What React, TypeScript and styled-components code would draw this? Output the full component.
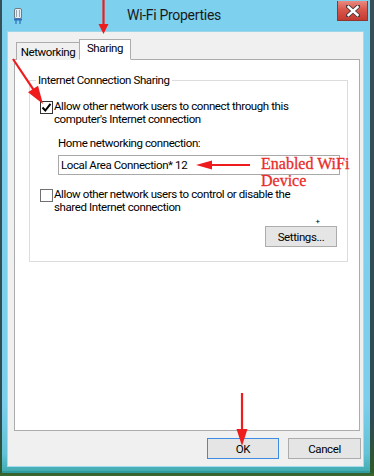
import React from "react";
import styled, { createGlobalStyle } from "styled-components";

const Global = createGlobalStyle`
  html, body { margin: 0; padding: 0; }
  body {
    width: 374px; height: 476px; overflow: hidden;
    font-family: Roboto, "Noto Sans", sans-serif;
    background: #2c4650;
  }
  * { box-sizing: border-box; }
`;

const UI = `Roboto, "Noto Sans", sans-serif`;
const FS = "11.5px";
const LS = "-0.4px";

const Desktop = styled.div`
  position: relative;
  width: 374px;
  height: 476px;
  background: linear-gradient(180deg, #36505a 0%, #2e4a52 88%, #2f5a2c 99%, #3b6a30 100%);
  padding-left: 2px;
`;

const Window = styled.div`
  width: 368px;
  height: 473px;
  display: flex;
  flex-direction: column;
  padding: 0 6px 6px 5px;
  background: linear-gradient(180deg, #7dd0ee 0%, #7ccfec 85%, #63c2d6 96%, #3fa9ad 100%);
  box-shadow: inset 0 -2px 0 #2f9aa0;
`;

const TitleBar = styled.div`
  height: 31px;
  display: flex;
  align-items: flex-start;
`;

const AppIcon = styled.div`
  width: 10px;
  height: 16px;
  margin: 8px 0 0 6px;
  display: flex;
`;

const Title = styled.div`
  flex: 1;
  text-align: center;
  font-family: ${UI};
  font-size: 14px;
  letter-spacing: -0.3px;
  color: #1a1a1a;
  padding-top: 7px;
  padding-right: 12px;
`;

const CloseButton = styled.div`
  width: 31px;
  height: 20px;
  margin-top: 1px;
  margin-right: -4px;
  background: linear-gradient(180deg, #e88a80 0%, #d9574c 45%, #c43a30 100%);
  border: 1px solid #8e3630;
  border-top: none;
  display: flex;
  align-items: center;
  justify-content: center;
`;

const Client = styled.div`
  flex: 1;
  background: #f0f0f0;
  border: 1px solid #a5dcec;
  border-top-color: #9bd6e8;
  display: flex;
  flex-direction: column;
  padding: 7px 2px 7px 5px;
`;

const TabStrip = styled.div`
  display: flex;
  align-items: flex-end;
  padding-left: 3px;
  height: 21px;
  position: relative;
  z-index: 1;
  margin-bottom: -1px;
`;

const Tab = styled.div<{ $active?: boolean }>`
  font-family: ${UI};
  font-size: ${FS};
  letter-spacing: ${LS};
  color: #000;
  display: flex;
  align-items: center;
  justify-content: center;
  border: 1px solid #acacac;
  background: ${(p) => (p.$active ? "#ffffff" : "#f0f0f0")};
  height: ${(p) => (p.$active ? "21px" : "18px")};
  width: ${(p) => (p.$active ? "52px" : "64px")};
  margin-left: ${(p) => (p.$active ? "-1px" : "0")};
  border-bottom: ${(p) => (p.$active ? "1px solid #ffffff" : "none")};
  padding-bottom: ${(p) => (p.$active ? "3px" : "0")};
`;

const Panel = styled.div`
  margin-left: 1px;
  width: 346px;
  height: 372px;
  background: #fff;
  border: 1px solid #acacac;
  padding: 0 11px 0 14px;
`;

const Group = styled.fieldset`
  margin: 13px 0 0 0;
  padding: 0 0 14px 0;
  border: 1px solid #dcdcdc;
  display: flex;
  flex-direction: column;
`;

const Legend = styled.legend`
  font-family: ${UI};
  font-size: ${FS};
  letter-spacing: ${LS};
  color: #000;
  padding: 0 2px;
  margin-left: 6px;
  line-height: 15px;
`;

const CheckRow = styled.div<{ $top: number }>`
  display: flex;
  align-items: flex-start;
  gap: 1px;
  margin: ${(p) => p.$top}px 0 0 10px;
`;

const Box = styled.div<{ $checked?: boolean }>`
  width: 13px;
  height: 13px;
  flex: none;
  margin-top: 1px;
  border: 1px solid ${(p) => (p.$checked ? "#333333" : "#707070")};
  background: #fff;
  display: flex;
  align-items: center;
  justify-content: center;
`;

const Label = styled.div`
  font-family: ${UI};
  font-size: ${FS};
  letter-spacing: ${LS};
  line-height: 13px;
  color: #000;
`;

const FieldLabel = styled.div`
  font-family: ${UI};
  font-size: ${FS};
  letter-spacing: ${LS};
  line-height: 13px;
  color: #000;
  margin: 11px 0 0 28px;
`;

const Input = styled.div`
  margin: 5px 0 0 28px;
  width: 282px;
  height: 20px;
  border: 1px solid #a8a8a8;
  font-family: ${UI};
  font-size: ${FS};
  letter-spacing: ${LS};
  color: #000;
  display: flex;
  align-items: center;
  padding-left: 2px;
`;

const Dot = styled.div`
  align-self: flex-end;
  margin: 5px 27px 0 0;
  font-family: ${UI};
  font-size: 8px;
  line-height: 6px;
  color: #000;
`;

const Button = styled.div<{ $default?: boolean; $w: number }>`
  width: ${(p) => p.$w}px;
  height: 21px;
  border: 1px solid ${(p) => (p.$default ? "#3c8ce4" : "#acacac")};
  background: #e5e5e5;
  font-family: ${UI};
  font-size: ${FS};
  letter-spacing: ${LS};
  color: #000;
  display: flex;
  align-items: center;
  justify-content: center;
`;

const SettingsRow = styled.div`
  display: flex;
  justify-content: flex-end;
  margin: 1px 10px 0 0;
`;

const Footer = styled.div`
  display: flex;
  justify-content: flex-end;
  gap: 9px;
  margin-top: 7px;
`;

const Overlay = styled.svg`
  position: absolute;
  left: 0;
  top: 0;
  pointer-events: none;
`;

const Note = styled.div`
  position: absolute;
  left: 261px;
  top: 155px;
  font-family: "Liberation Serif", serif;
  font-size: 16px;
  line-height: 17px;
  color: #ea2b2b;
  font-weight: 400;
  -webkit-text-stroke: 0.3px #ea2b2b;
`;

const RED = "#ee1c1c";

function arrowHead(x1: number, y1: number, x2: number, y2: number, len: number, half: number) {
  const dx = x2 - x1;
  const dy = y2 - y1;
  const d = Math.hypot(dx, dy);
  const ux = dx / d;
  const uy = dy / d;
  const bx = x2 - ux * len;
  const by = y2 - uy * len;
  const px = -uy * half;
  const py = ux * half;
  return `${x2},${y2} ${bx + px},${by + py} ${bx - px},${by - py}`;
}

const Arrow: React.FC<{ x1: number; y1: number; x2: number; y2: number; len?: number; half?: number }> = ({
  x1, y1, x2, y2, len = 14, half = 4.5,
}) => {
  const d = Math.hypot(x2 - x1, y2 - y1);
  const ex = x2 - ((x2 - x1) / d) * (len - 2);
  const ey = y2 - ((y2 - y1) / d) * (len - 2);
  return (
    <g>
      <line x1={x1} y1={y1} x2={ex} y2={ey} stroke={RED} strokeWidth={2.2} />
      <polygon points={arrowHead(x1, y1, x2, y2, len, half)} fill={RED} />
    </g>
  );
};

export default function App() {
  return (
    <>
      <Global />
      <Desktop>
        <Window>
          <TitleBar>
            <AppIcon>
              <svg width="10" height="16" viewBox="0 0 10 16">
                <rect x="1.5" y="0.5" width="7" height="10" rx="1.5" fill="#e8eef2" stroke="#6e7b85" />
                <line x1="3.5" y1="2" x2="3.5" y2="9" stroke="#9aa6ae" />
                <line x1="6.5" y1="2" x2="6.5" y2="9" stroke="#9aa6ae" />
                <rect x="1" y="10.5" width="8" height="2" fill="#2d6fb8" />
                <line x1="3" y1="12" x2="3" y2="16" stroke="#2d6fb8" strokeWidth="1.2" />
                <line x1="7" y1="12" x2="7" y2="16" stroke="#2d6fb8" strokeWidth="1.2" />
              </svg>
            </AppIcon>
            <Title>Wi-Fi Properties</Title>
            <CloseButton>
              <svg width="14" height="12" viewBox="0 0 14 12">
                <path d="M2 1.5 L12 10.5 M12 1.5 L2 10.5" stroke="#4a3a3a" strokeWidth="4.2" strokeLinecap="square" />
                <path d="M2.5 2 L11.5 10 M11.5 2 L2.5 10" stroke="#ffffff" strokeWidth="2.4" strokeLinecap="square" />
              </svg>
            </CloseButton>
          </TitleBar>
          <Client>
            <TabStrip>
              <Tab>Networking</Tab>
              <Tab $active>Sharing</Tab>
            </TabStrip>
            <Panel>
              <Group>
                <Legend>Internet Connection Sharing</Legend>
                <CheckRow $top={12}>
                  <Box $checked>
                    <svg width="11" height="11" viewBox="0 0 11 11">
                      <path d="M1.5 5.5 L4.3 8.5 L9.5 1.8" fill="none" stroke="#000" strokeWidth="2" />
                    </svg>
                  </Box>
                  <Label>
                    Allow other network users to connect through this
                    <br />
                    computer's Internet connection
                  </Label>
                </CheckRow>
                <FieldLabel>Home networking connection:</FieldLabel>
                <Input>Local Area Connection* 12</Input>
                <CheckRow $top={13}>
                  <Box />
                  <Label>
                    Allow other network users to control or disable the
                    <br />
                    shared Internet connection
                  </Label>
                </CheckRow>
                <Dot>+</Dot>
                <SettingsRow>
                  <Button $w={72}>Settings...</Button>
                </SettingsRow>
              </Group>
            </Panel>
            <Footer>
              <Button $default $w={72}>OK</Button>
              <Button $w={73}>Cancel</Button>
            </Footer>
          </Client>
        </Window>
        <Note>
          Enabled WiFi
          <br />
          Device
        </Note>
        <Overlay width="374" height="476" viewBox="0 0 374 476">
          <Arrow x1={103.5} y1={0} x2={103.5} y2={34} len={10} half={5} />
          <Arrow x1={13} y1={59} x2={43} y2={104} len={18} half={6} />
          <Arrow x1={250} y1={165} x2={196} y2={165} len={16} half={4.5} />
          <Arrow x1={242} y1={393} x2={242} y2={446} len={17} half={5.5} />
        </Overlay>
      </Desktop>
    </>
  );
}
